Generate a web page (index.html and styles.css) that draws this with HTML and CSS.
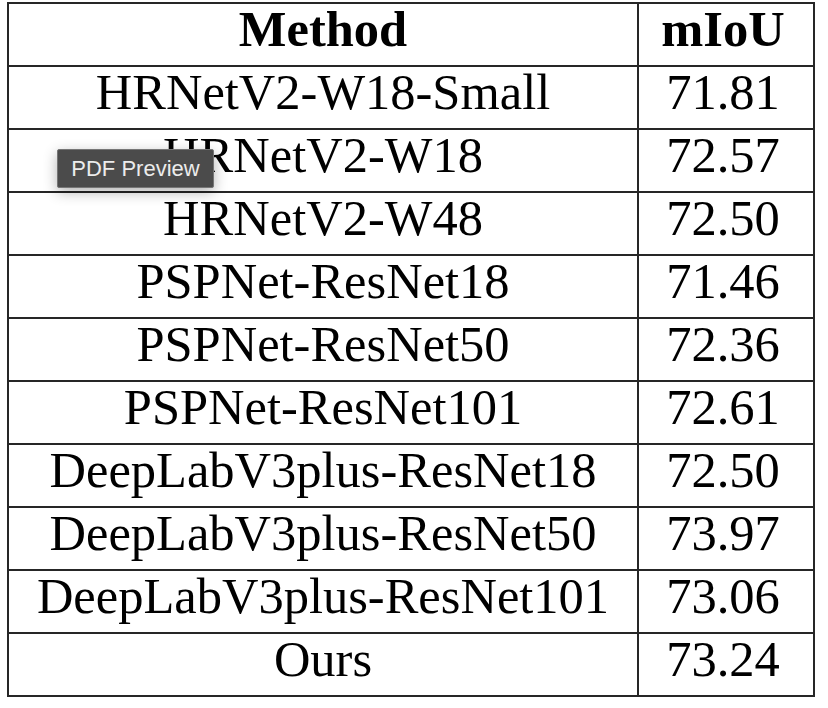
FILE: index.html
```html
<!DOCTYPE html>
<html>
<head>
<meta charset="utf-8">
<link rel="stylesheet" href="styles.css">
</head>
<body>
<table class="results">
  <thead>
    <tr><th class="method">Method</th><th class="score"><span class="num">mIoU</span></th></tr>
  </thead>
  <tbody>
    <tr><td class="method">HRNetV2-W18-Small</td><td class="score"><span class="num">71.81</span></td></tr>
    <tr><td class="method">HRNetV2-W18</td><td class="score"><span class="num">72.57</span></td></tr>
    <tr><td class="method">HRNetV2-W48</td><td class="score"><span class="num">72.50</span></td></tr>
    <tr><td class="method">PSPNet-ResNet18</td><td class="score"><span class="num">71.46</span></td></tr>
    <tr><td class="method">PSPNet-ResNet50</td><td class="score"><span class="num">72.36</span></td></tr>
    <tr><td class="method">PSPNet-ResNet101</td><td class="score"><span class="num">72.61</span></td></tr>
    <tr><td class="method">DeepLabV3plus-ResNet18</td><td class="score"><span class="num">72.50</span></td></tr>
    <tr><td class="method">DeepLabV3plus-ResNet50</td><td class="score"><span class="num">73.97</span></td></tr>
    <tr><td class="method">DeepLabV3plus-ResNet101</td><td class="score"><span class="num">73.06</span></td></tr>
    <tr><td class="method">Ours</td><td class="score"><span class="num">73.24</span></td></tr>
  </tbody>
</table>
<div class="tooltip">PDF Preview</div>
</body>
</html>
```
FILE: styles.css
```css
html, body {
  margin: 0;
  padding: 0;
  background: #ffffff;
}
body {
  padding: 2px 0 0 7px;
  position: relative;
  font-family: "Liberation Serif", "Times New Roman", serif;
  color: #000;
}
.results {
  border-collapse: separate;
  border-spacing: 2px;
  background: #262626;
  width: 808px;
  table-layout: fixed;
}
.results th,
.results td {
  background: #fff;
  height: 61px;
  padding: 0;
  text-align: center;
  vertical-align: top;
  font-size: 50.5px;
  line-height: 50px;
  white-space: nowrap;
}
.results th { font-weight: bold; }
.results .method { width: 628px; }
.results .score { width: 174px; }
.num { position: relative; left: -3px; }
.tooltip {
  position: absolute;
  left: 57px;
  top: 149px;
  width: 155px;
  height: 37px;
  box-sizing: content-box;
  background: #4b4b4b;
  border: 1px solid #767676;
  border-radius: 2px;
  box-shadow: 0 4px 14px rgba(0,0,0,0.3);
  color: #ececec;
  font-family: "Liberation Sans", Arial, sans-serif;
  font-size: 22px;
  line-height: 37px;
  text-align: center;
}
```
